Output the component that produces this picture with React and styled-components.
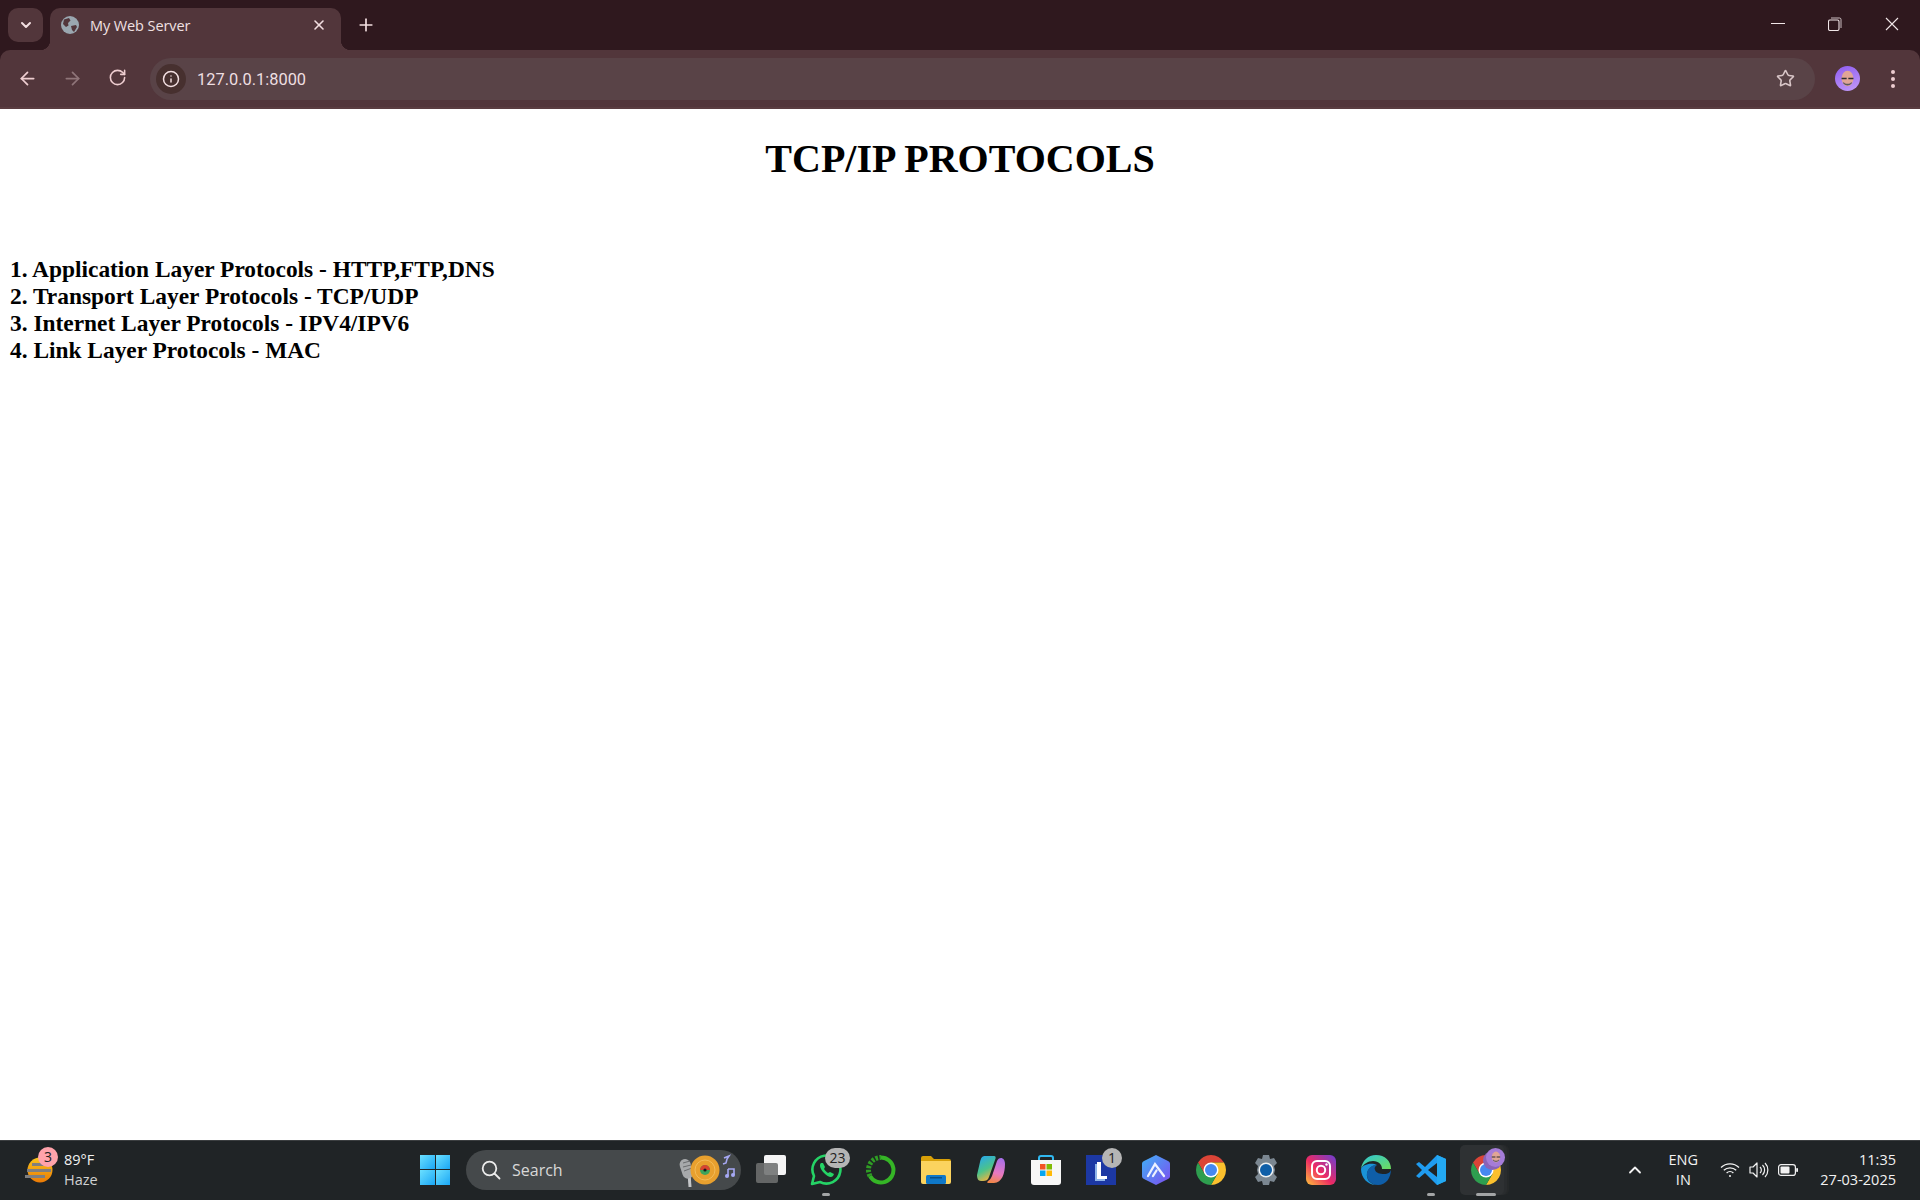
import React from 'react';
import styled, { createGlobalStyle } from 'styled-components';
import { ChevronDown, X, Plus, ArrowLeft, ArrowRight, RotateCw, Info, Star, ChevronUp } from 'lucide-react';

const GlobalStyle = createGlobalStyle`
  html, body {
    margin: 0;
    padding: 0;
    background: #fff;
  }
`;

const Screen = styled.div`
  width: 1920px;
  height: 1200px;
  display: flex;
  flex-direction: column;
  overflow: hidden;
  background: #2f181e;
  font-family: "Open Sans", "Noto Sans", sans-serif;
`;

const TabStrip = styled.div`
  height: 50px;
  flex: none;
  background: #2f181e;
  display: flex;
  align-items: flex-end;
  padding-left: 8px;
  position: relative;
`;

const TabSearch = styled.div`
  width: 35px;
  height: 34px;
  margin-bottom: 8px;
  border-radius: 10px;
  background: #52363b;
  color: #f3dfe1;
  display: flex;
  align-items: center;
  justify-content: center;
`;

const Tab = styled.div`
  width: 291px;
  height: 42px;
  margin-left: 7px;
  padding: 0 14px 8px 11px;
  box-sizing: border-box;
  background: #52363b;
  border-radius: 10px 10px 0 0;
  display: flex;
  align-items: center;
  color: #f3dfe1;
  position: relative;
  &::before,
  &::after {
    content: '';
    position: absolute;
    bottom: 0;
    width: 10px;
    height: 10px;
  }
  &::before {
    left: -10px;
    background: radial-gradient(circle at 0 0, transparent 10px, #52363b 10.5px);
  }
  &::after {
    right: -10px;
    background: radial-gradient(circle at 100% 0, transparent 10px, #52363b 10.5px);
  }
`;

const TabTitle = styled.span`
  margin-left: 11px;
  flex: 1;
  font-size: 14.5px;
  letter-spacing: -0.1px;
  color: #f0e0e2;
`;

const NewTab = styled.div`
  margin: 0 0 8px 15px;
  height: 34px;
  display: flex;
  align-items: center;
  color: #f3dfe1;
`;

const WindowControls = styled.div`
  margin-left: auto;
  align-self: flex-start;
  display: flex;
  height: 48px;
  align-items: center;
  color: #f1e6e8;
`;

const WindowButton = styled.div`
  width: 57px;
  display: flex;
  justify-content: center;
  align-items: center;
`;

const Toolbar = styled.div`
  height: 59px;
  flex: none;
  box-sizing: border-box;
  background: #52363b;
  border-radius: 10px 10px 0 0;
  border-bottom: 2px solid #5a3d41;
  display: flex;
  align-items: center;
  color: #eecdd0;
`;

const NavButton = styled.div`
  width: 45px;
  display: flex;
  justify-content: center;
  color: ${(p) => (p.$dim ? '#8f7579' : '#eecdd0')};
`;

const NavGroup = styled.div`
  display: flex;
  padding-left: 5px;
  margin-right: 10px;
`;

const Omnibox = styled.div`
  width: 1665px;
  height: 42px;
  border-radius: 21px;
  background: #594347;
  display: flex;
  align-items: center;
  padding: 0 20px 0 6px;
  box-sizing: border-box;
`;

const InfoChip = styled.div`
  width: 30px;
  height: 30px;
  border-radius: 50%;
  background: #47302f;
  display: flex;
  align-items: center;
  justify-content: center;
  color: #f3dfe1;
`;

const Url = styled.span`
  margin-left: 11px;
  padding-top: 2px;
  flex: 1;
  font-family: "Roboto", "Open Sans", sans-serif;
  font-size: 16.4px;
  color: #eedfe1;
`;

const ToolbarEnd = styled.div`
  display: flex;
  align-items: center;
  margin-left: 20px;
`;

const Avatar = styled.div`
  width: 25px;
  height: 25px;
  border-radius: 50%;
  background: linear-gradient(160deg, #8e5cf0, #c39cf8);
  display: flex;
  align-items: center;
  justify-content: center;
`;

const MenuDots = styled.div`
  margin-left: 31px;
  display: flex;
  flex-direction: column;
  gap: 3px;
  & > i {
    width: 4px;
    height: 4px;
    border-radius: 50%;
    background: #eecdd0;
  }
`;

const Page = styled.main`
  flex: 1;
  background: #fff;
  padding: 0 10px;
  color: #000;
  font-family: "Liberation Serif", "Times New Roman", serif;
`;

const Heading = styled.h1`
  margin: 27px 0 74px;
  text-align: center;
  font-size: 40px;
  line-height: 46px;
  font-weight: 700;
`;

const ProtocolLine = styled.div`
  font-size: 23.4px;
  line-height: 27px;
  font-weight: 700;
`;

const Taskbar = styled.footer`
  height: 60px;
  flex: none;
  box-sizing: border-box;
  padding-bottom: 2px;
  background: #202426;
  border-top: 1px solid #3b3e40;
  display: flex;
  align-items: center;
  color: #f2f2f2;
`;

const Weather = styled.div`
  width: 419px;
  padding-left: 24px;
  box-sizing: border-box;
  display: flex;
  align-items: center;
  position: relative;
`;

const WeatherBadge = styled.span`
  position: absolute;
  left: 38px;
  top: -3px;
  width: 20px;
  height: 20px;
  border-radius: 50%;
  background: #ffa3ab;
  color: #222;
  font-size: 14px;
  line-height: 20px;
  text-align: center;
`;

const WeatherText = styled.div`
  margin-left: 10px;
  font-size: 14.5px;
  line-height: 20px;
  & > span {
    display: block;
  }
  & > span + span {
    color: #cfd1d2;
  }
`;

const StartButton = styled.div`
  width: 30px;
  height: 30px;
  margin-left: 1px;
  flex: none;
  display: grid;
  grid-template-columns: 1fr 1fr;
  gap: 1px;
  & > i {
    background: linear-gradient(135deg, #6be0ff, #1aa6f5);
  }
`;

const SearchBox = styled.div`
  width: 275px;
  height: 40px;
  margin-left: 16px;
  flex: none;
  box-sizing: border-box;
  border-radius: 20px;
  background: #45494b;
  padding-left: 15px;
  display: flex;
  align-items: center;
  color: #e8e8e8;
  position: relative;
`;

const SearchLabel = styled.span`
  margin-left: 11px;
  font-size: 16px;
  color: #d8d8d8;
`;

const SearchDoodle = styled.div`
  position: absolute;
  right: 1px;
  top: 1px;
`;

const Apps = styled.div`
  display: flex;
  margin-left: 2px;
`;

const AppSlot = styled.div`
  width: 55px;
  height: 50px;
  display: flex;
  align-items: center;
  justify-content: center;
  position: relative;
  ${(p) =>
    p.$active &&
    `
    &::before {
      content: '';
      position: absolute;
      left: 2px;
      top: 0;
      width: 44px;
      height: 50px;
      border-radius: 5px;
      background: #2e3133;
      box-shadow: 3px 0 0 #292c2e, 5px 0 0 #252829;
    }
  `}
  & > svg {
    position: relative;
  }
`;

const AppBadge = styled.span`
  position: absolute;
  top: 3px;
  left: ${(p) => p.$left}px;
  width: ${(p) => p.$width}px;
  height: 20px;
  border-radius: 10px;
  background: #b5b5b5;
  color: #222;
  font-size: 14px;
  line-height: 20px;
  text-align: center;
`;

const RunningDot = styled.span`
  position: absolute;
  left: 50%;
  bottom: -1px;
  transform: translateX(-50%);
  width: ${(p) => (p.$active ? 20 : 8)}px;
  height: 3px;
  border-radius: 2px;
  background: #a3a5a6;
`;

const ChromeOverlay = styled.div`
  position: absolute;
  right: 8px;
  top: 3px;
  width: 19px;
  height: 19px;
  border-radius: 50%;
  background: #a57cd8;
  box-shadow: -3px 3px 0 #8a63b8;
  display: flex;
  align-items: center;
  justify-content: center;
`;

const Tray = styled.div`
  margin-left: auto;
  display: flex;
  align-items: center;
  padding-right: 24px;
`;

const Lang = styled.div`
  margin-left: 14px;
  width: 48px;
  text-align: center;
  font-size: 14.5px;
  line-height: 20px;
`;

const TrayIcons = styled.div`
  margin-left: 13px;
  display: flex;
  align-items: center;
  gap: 9px;
`;

const Clock = styled.div`
  margin-left: 22px;
  text-align: right;
  font-size: 14.5px;
  line-height: 20px;
`;

const GlobeIcon = () => (
  <svg width="18" height="18" viewBox="0 0 18 18">
    <circle cx="9" cy="9" r="9" fill="#9aa7b0" />
    <path d="M3 3.5 8 2l1.5 2.5L7 7 7.5 9.5 5 11 2 8zM10 10l5-1 1 2-3 5-2-2z" fill="#52363b" />
  </svg>
);

const FaceIcon = ({ size = 17 }) => (
  <svg width={size} height={size} viewBox="0 0 20 20">
    <ellipse cx="10" cy="10" rx="7" ry="9" fill="#e0a596" />
    <path d="M3 9h6v2H3zM11 9h6v2h-6z" fill="#2c2c33" />
    <path d="M5 14c3 3 7 3 10 0v2c-3 3-7 3-10 0z" fill="#5a5a62" />
  </svg>
);

const RestoreIcon = () => (
  <svg width="14" height="14" viewBox="0 0 14 14" fill="none" stroke="currentColor">
    <rect x="0.5" y="3" width="10.5" height="10.5" rx="1.5" strokeWidth="1.1" />
    <path d="M3 1h8.5A1.5 1.5 0 0 1 13 2.5V11" strokeWidth="1" opacity=".8" />
  </svg>
);

const WeatherIcon = () => (
  <svg width="30" height="28" viewBox="0 0 30 28">
    <defs>
      <linearGradient id="sun" x1="0" y1="0" x2="0" y2="1">
        <stop offset="0" stopColor="#f9c51c" />
        <stop offset="1" stopColor="#ea7a06" />
      </linearGradient>
    </defs>
    <circle cx="16" cy="14" r="12.5" fill="url(#sun)" />
    <path d="M8 7h12v3H8zM3 13h24v3H3zM1 19h20v3H1z" fill="#7f7f80" />
  </svg>
);

const SearchGlyph = () => (
  <svg width="20" height="20" viewBox="0 0 20 20" fill="none" stroke="#ececec" strokeWidth="1.8">
    <circle cx="8.5" cy="8.5" r="6.8" />
    <path d="M13.5 13.5 18.5 18.5" strokeLinecap="round" />
  </svg>
);

const Doodle = () => (
  <svg width="62" height="38" viewBox="0 0 62 38">
    <path d="M11 22 12 36" stroke="#c4c6c8" strokeWidth="3" />
    <rect x="3" y="8" width="11" height="20" rx="5.5" transform="rotate(-18 8 18)" fill="#a7a9ab" />
    <path d="M5 12 12 10M5 16 13 14M6 20 14 17" stroke="#6a6c6e" />
    <circle cx="27" cy="19" r="14.5" fill="#e8a02e" />
    <circle cx="27" cy="19" r="10" fill="none" stroke="#f3bb58" />
    <circle cx="27" cy="19" r="5" fill="#3fa45b" />
    <path d="M22 19a5 5 0 0 1 10 0z" fill="#d8452f" />
    <circle cx="27" cy="19" r="1.6" fill="#1b1b1b" />
    <path d="M46 7l5-2-2 3-1 4-3 1M50 18h6v6M50 18v7" fill="none" stroke="#a6a8f4" strokeWidth="1.6" />
    <circle cx="49" cy="25" r="2" fill="#a6a8f4" />
    <circle cx="55" cy="24" r="2" fill="#a6a8f4" />
  </svg>
);

const TaskViewIcon = () => (
  <svg width="30" height="30" viewBox="0 0 30 30">
    <rect x="8" y="0" width="22" height="20" rx="2" fill="#f4f4f4" />
    <rect x="0" y="8" width="22" height="20" rx="2" fill="#6d6f70" fillOpacity=".88" />
  </svg>
);

const WhatsAppIcon = () => (
  <svg width="32" height="32" viewBox="0 0 32 32">
    <path
      d="M2 30l2-8a14 14 0 1 1 6 6z"
      fill="none"
      stroke="#25d366"
      strokeWidth="2.6"
      strokeLinejoin="round"
    />
    <path
      d="M11 9c-2 2-1 6 3 10s7 5 9 3l1-2-4-2-2 1c-2-1-3-3-4-4l1-2-2-4z"
      fill="#25d366"
    />
  </svg>
);

const RingIcon = () => (
  <svg width="30" height="30" viewBox="0 0 30 30" fill="none">
    <path d="M15 2.5a12.5 12.5 0 1 1-11 18.5" stroke="#35b526" strokeWidth="4" />
    <path d="M4 21A12.5 12.5 0 0 1 15 2.5" stroke="#2f9e24" strokeWidth="5" strokeDasharray="2.5 1.5" />
  </svg>
);

const FolderIcon = () => (
  <svg width="30" height="28" viewBox="0 0 30 28">
    <path d="M0 2a2 2 0 0 1 2-2h8l3 3h15a2 2 0 0 1 2 2v3H0z" fill="#d8a008" />
    <path d="M0 5h30v21a2 2 0 0 1-2 2H2a2 2 0 0 1-2-2z" fill="#fbd35e" />
    <rect x="5" y="19" width="20" height="9" rx="1.5" fill="#0f78c8" />
    <rect x="9" y="21" width="12" height="1.5" fill="#0a4f86" />
  </svg>
);

const CopilotIcon = () => (
  <svg width="28" height="27" viewBox="0 0 28 27">
    <defs>
      <linearGradient id="copA" x1="0.2" y1="0" x2="0.6" y2="1">
        <stop offset="0" stopColor="#28a8ea" />
        <stop offset=".55" stopColor="#4cc38a" />
        <stop offset="1" stopColor="#f9b33c" />
      </linearGradient>
      <linearGradient id="copB" x1="0.6" y1="0" x2="0.4" y2="1">
        <stop offset="0" stopColor="#a86fe8" />
        <stop offset=".6" stopColor="#e879c0" />
        <stop offset="1" stopColor="#f0864a" />
      </linearGradient>
    </defs>
    <path d="M8 0h9c2 0 2 2 1 4l-6 17c-1 3-3 4-6 4H4c-3 0-4-3-4-6l3-13C4 2 5 0 8 0z" fill="url(#copA)" />
    <path d="M17 27h-6c-1 0-1-1 0-2 2-1 3-3 4-5l5-15c1-2 2-3 4-3 2 0 4 2 4 6 0 9-3 19-11 19z" fill="url(#copB)" />
  </svg>
);

const StoreIcon = () => (
  <svg width="30" height="30" viewBox="0 0 30 30">
    <path d="M8 7V3a2 2 0 0 1 2-2h10a2 2 0 0 1 2 2v4" fill="none" stroke="#30b8f0" strokeWidth="2" />
    <path d="M0 5h30v22a3 3 0 0 1-3 3H3a3 3 0 0 1-3-3z" fill="#f7f7f7" />
    <rect x="9" y="9" width="5.5" height="5.5" fill="#f35325" />
    <rect x="15.5" y="9" width="5.5" height="5.5" fill="#81bc06" />
    <rect x="9" y="15.5" width="5.5" height="5.5" fill="#05a6f0" />
    <rect x="15.5" y="15.5" width="5.5" height="5.5" fill="#ffba08" />
  </svg>
);

const LetterTile = () => (
  <svg width="30" height="30" viewBox="0 0 30 30">
    <rect width="30" height="30" fill="#1c38a4" />
    <path d="M9 9h4v14h6v3H9z" fill="#8fb4e8" />
    <path d="M11 7h4v14h6v3H11z" fill="#fff" />
  </svg>
);

const HexIcon = () => (
  <svg width="28" height="30" viewBox="0 0 28 30">
    <defs>
      <linearGradient id="hex" x1="0" y1="0" x2="1" y2="1">
        <stop offset="0" stopColor="#3fb1f5" />
        <stop offset="1" stopColor="#7d4cf0" />
      </linearGradient>
    </defs>
    <path d="M14 0 26 6a3 3 0 0 1 2 3v12a3 3 0 0 1-2 3l-12 6-12-6a3 3 0 0 1-2-3V9a3 3 0 0 1 2-3z" fill="url(#hex)" />
    <path d="M6 21 13 9 22 21M11 21 14.5 15.5" fill="none" stroke="#eef2ff" strokeWidth="2.3" strokeLinecap="round" />
  </svg>
);

const ChromeIcon = ({ size = 30 }) => (
  <svg width={size} height={size} viewBox="4 4 40 40">
    <path d="M24 24 15.34 29 6.68 14A20 20 0 0 1 41.32 14H24z" fill="#db4437" />
    <path d="M24 24V14H41.32A20 20 0 0 1 24 44L32.66 29z" fill="#fbc02d" />
    <path d="M24 24 32.66 29 24 44A20 20 0 0 1 6.68 14L15.34 29z" fill="#2e9e4f" />
    <circle cx="24" cy="24" r="10" fill="#fff" />
    <circle cx="24" cy="24" r="8" fill="#4688f1" />
  </svg>
);

const GearIcon = () => (
  <svg width="30" height="30" viewBox="0 0 30 30">
    <path
      d="M12 0h6l1 4 4-1 3 5-3 3 1 4-1 4 3 3-3 5-4-1-1 4h-6l-1-4-4 1-3-5 3-3-1-4 1-4-3-3 3-5 4 1z"
      fill="#7b8791"
    />
    <circle cx="15" cy="15" r="7.5" fill="#eef1f3" />
    <circle cx="15" cy="15" r="6" fill="#0f5fa8" />
  </svg>
);

const InstagramIcon = () => (
  <svg width="30" height="30" viewBox="0 0 30 30">
    <defs>
      <linearGradient id="insta" x1="0" y1="1" x2="1" y2="0">
        <stop offset="0" stopColor="#fdc33a" />
        <stop offset=".45" stopColor="#ee2a63" />
        <stop offset="1" stopColor="#6b3fd4" />
      </linearGradient>
    </defs>
    <rect width="30" height="30" rx="6" fill="url(#insta)" />
    <rect x="6" y="6" width="18" height="18" rx="5" fill="none" stroke="#fff" strokeWidth="2" />
    <circle cx="15" cy="15" r="4.2" fill="none" stroke="#fff" strokeWidth="2" />
    <circle cx="20.5" cy="9.5" r="1.2" fill="#fff" />
  </svg>
);

const EdgeIcon = () => (
  <svg width="30" height="30" viewBox="0 0 30 30">
    <defs>
      <linearGradient id="edgeA" x1="0" y1="0" x2="1" y2="1">
        <stop offset="0" stopColor="#2dc6d8" />
        <stop offset="1" stopColor="#6fdc5c" />
      </linearGradient>
    </defs>
    <path d="M15 0C7 0 1 6 0 14c2-5 7-8 12-8 6 0 9 4 9 8h9C30 6 24 0 15 0z" fill="url(#edgeA)" />
    <path d="M30 14c0 3-3 5-7 5s-8-1-9-4c-1-2 0-4 2-5-5 0-9 3-10 8-1 6 4 12 11 12 8 0 13-7 13-16z" fill="#0f5ea8" />
    <path d="M0 14c0 9 7 16 15 16-6-1-10-6-9-12 1-5 5-8 10-8-6-3-15 0-16 4z" fill="#1a93d8" />
  </svg>
);

const VsCodeIcon = () => (
  <svg width="30" height="30" viewBox="0 0 30 30">
    <path d="M21 0 30 4v22l-9 4-12-12L3 23l-3-2 6-6-6-6 3-2 6 5z" fill="#1f9cf0" />
    <path d="M21 8 12 15l9 7z" fill="#202426" />
    <path d="M21 0 30 4v22l-9 4z" fill="#23a9f2" />
  </svg>
);

const WifiIcon = () => (
  <svg width="20" height="16" viewBox="0 0 20 16" fill="none" stroke="#f2f2f2" strokeWidth="1.3">
    <path d="M1 5.5a13 13 0 0 1 18 0M3.8 8.3a9 9 0 0 1 12.4 0M6.6 11a5 5 0 0 1 6.8 0" />
    <circle cx="10" cy="14" r="1" fill="#f2f2f2" stroke="none" />
  </svg>
);

const VolumeIcon = () => (
  <svg width="20" height="18" viewBox="0 0 20 18" fill="none" stroke="#f2f2f2" strokeWidth="1.2">
    <path d="M1 6h3l4-4v14l-4-4H1z" strokeLinejoin="round" />
    <path d="M11 6a4 4 0 0 1 0 6M13.5 4a7 7 0 0 1 0 10M16 2a10 10 0 0 1 0 14" />
  </svg>
);

const BatteryIcon = () => (
  <svg width="20" height="12" viewBox="0 0 20 12">
    <rect x="0.6" y="0.6" width="16.8" height="10.8" rx="2.5" fill="none" stroke="#f2f2f2" strokeWidth="1.2" />
    <rect x="2.5" y="2.5" width="9" height="7" rx="1" fill="#f2f2f2" />
    <rect x="18.2" y="4" width="1.8" height="4" rx=".8" fill="#f2f2f2" />
  </svg>
);

const protocols = [
  '1. Application Layer Protocols - HTTP,FTP,DNS',
  '2. Transport Layer Protocols - TCP/UDP',
  '3. Internet Layer Protocols - IPV4/IPV6',
  '4. Link Layer Protocols - MAC',
];

const App = () => (
  <Screen>
    <GlobalStyle />
    <TabStrip>
      <TabSearch>
        <ChevronDown size={16} strokeWidth={3} />
      </TabSearch>
      <Tab>
        <GlobeIcon />
        <TabTitle>My Web Server</TabTitle>
        <X size={16} strokeWidth={2.4} />
      </Tab>
      <NewTab>
        <Plus size={20} strokeWidth={2} />
      </NewTab>
      <WindowControls>
        <WindowButton>
          <svg width="14" height="2" viewBox="0 0 14 2">
            <rect width="14" height="1" fill="currentColor" />
          </svg>
        </WindowButton>
        <WindowButton>
          <RestoreIcon />
        </WindowButton>
        <WindowButton>
          <svg width="14" height="14" viewBox="0 0 14 14" stroke="currentColor" strokeWidth="1.1">
            <path d="M1 1 13 13M13 1 1 13" />
          </svg>
        </WindowButton>
      </WindowControls>
    </TabStrip>

    <Toolbar>
      <NavGroup>
        <NavButton>
          <ArrowLeft size={21} strokeWidth={2} />
        </NavButton>
        <NavButton $dim>
          <ArrowRight size={21} strokeWidth={2} />
        </NavButton>
        <NavButton>
          <RotateCw size={19} strokeWidth={2} />
        </NavButton>
      </NavGroup>
      <Omnibox>
        <InfoChip>
          <Info size={18} strokeWidth={2} />
        </InfoChip>
        <Url>127.0.0.1:8000</Url>
        <Star size={19} strokeWidth={2} color="#d9c6c8" />
      </Omnibox>
      <ToolbarEnd>
        <Avatar>
          <FaceIcon />
        </Avatar>
        <MenuDots>
          <i />
          <i />
          <i />
        </MenuDots>
      </ToolbarEnd>
    </Toolbar>

    <Page>
      <Heading>TCP/IP PROTOCOLS</Heading>
      {protocols.map((line) => (
        <ProtocolLine key={line}>{line}</ProtocolLine>
      ))}
    </Page>

    <Taskbar>
      <Weather>
        <WeatherIcon />
        <WeatherBadge>3</WeatherBadge>
        <WeatherText>
          <span>89°F</span>
          <span>Haze</span>
        </WeatherText>
      </Weather>
      <StartButton>
        <i />
        <i />
        <i />
        <i />
      </StartButton>
      <SearchBox>
        <SearchGlyph />
        <SearchLabel>Search</SearchLabel>
        <SearchDoodle>
          <Doodle />
        </SearchDoodle>
      </SearchBox>
      <Apps>
        <AppSlot>
          <TaskViewIcon />
        </AppSlot>
        <AppSlot>
          <WhatsAppIcon />
          <AppBadge $left={27} $width={25}>23</AppBadge>
          <RunningDot />
        </AppSlot>
        <AppSlot>
          <RingIcon />
        </AppSlot>
        <AppSlot>
          <FolderIcon />
        </AppSlot>
        <AppSlot>
          <CopilotIcon />
        </AppSlot>
        <AppSlot>
          <StoreIcon />
        </AppSlot>
        <AppSlot>
          <LetterTile />
          <AppBadge $left={29} $width={20}>1</AppBadge>
        </AppSlot>
        <AppSlot>
          <HexIcon />
        </AppSlot>
        <AppSlot>
          <ChromeIcon />
        </AppSlot>
        <AppSlot>
          <GearIcon />
        </AppSlot>
        <AppSlot>
          <InstagramIcon />
        </AppSlot>
        <AppSlot>
          <EdgeIcon />
        </AppSlot>
        <AppSlot>
          <VsCodeIcon />
          <RunningDot />
        </AppSlot>
        <AppSlot $active>
          <ChromeIcon />
          <ChromeOverlay>
            <FaceIcon size={12} />
          </ChromeOverlay>
          <RunningDot $active />
        </AppSlot>
      </Apps>
      <Tray>
        <ChevronUp size={20} strokeWidth={2.2} />
        <Lang>
          ENG
          <br />
          IN
        </Lang>
        <TrayIcons>
          <WifiIcon />
          <VolumeIcon />
          <BatteryIcon />
        </TrayIcons>
        <Clock>
          11:35
          <br />
          27-03-2025
        </Clock>
      </Tray>
    </Taskbar>
  </Screen>
);

export default App;
